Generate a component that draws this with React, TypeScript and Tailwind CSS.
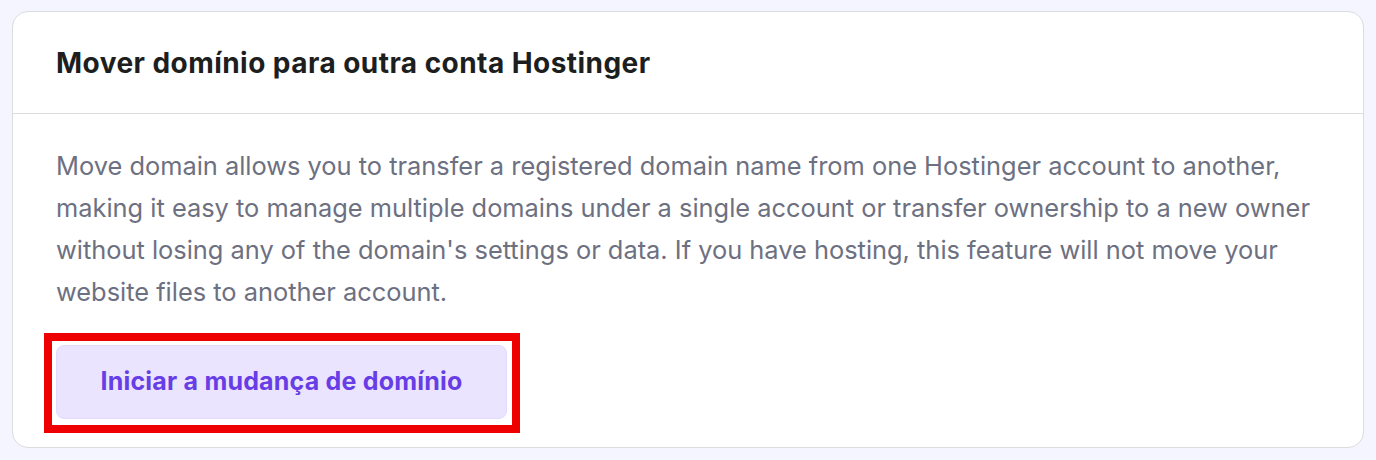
import React from 'react';

export default function App() {
  return (
    <div
      className="min-h-[460px] w-full bg-[#f4f5ff] px-[12px] pt-[11px] pb-[13px]"
      style={{ fontFamily: 'Inter, "Noto Sans", sans-serif' }}
    >
      <div className="rounded-[16px] border border-[#dadce0] bg-white">
        <div className="flex h-[102px] items-center border-b border-[#dadce0] px-[43px]">
          <h2 className="text-[28px] font-bold tracking-[0.45px] text-[#1d1e20]">
            Mover domínio para outra conta Hostinger
          </h2>
        </div>
        <div className="px-[43px] pt-[31px] pb-[14px]">
          <p className="text-[25.4px] leading-[42px] text-[#6d7081]">
            Move domain allows you to transfer a registered domain name from one Hostinger account to another,
            making it easy to manage multiple domains under a single account or transfer ownership to a new owner
            without losing any of the domain's settings or data. If you have hosting, this feature will not move your
            website files to another account.
          </p>
          <div className="ml-[-12px] mt-[20px] inline-block border-[8px] border-[#ee0000] pt-[4px] pr-[5px] pb-[6px] pl-[4px]">
            <button className="flex h-[74px] w-[451px] items-center justify-center rounded-[8px] border border-[#e2dbff] bg-[#ebe4ff] text-[25px] font-bold tracking-[0.2px] text-[#673de6]">
              Iniciar a mudança de domínio
            </button>
          </div>
        </div>
      </div>
    </div>
  );
}
